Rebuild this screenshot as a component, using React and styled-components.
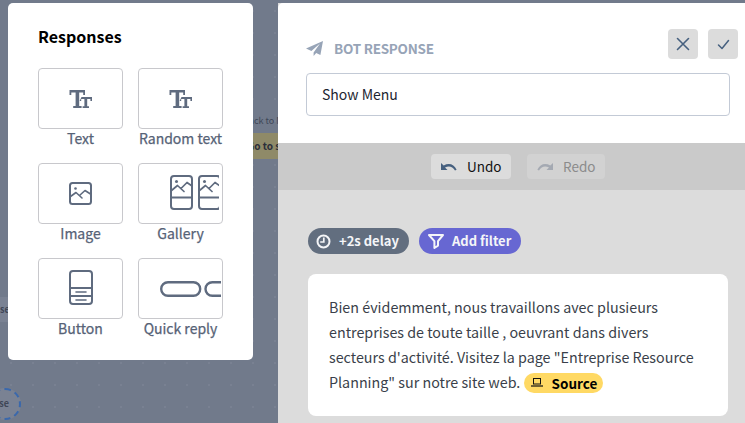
import React from "react";
import styled, { createGlobalStyle } from "styled-components";

const Global = createGlobalStyle`
  html, body {
    margin: 0;
    padding: 0;
    height: 100%;
    overflow: hidden;
  }
  body {
    font-family: "Noto Sans CJK SC", "Source Sans Pro", "Open Sans", sans-serif;
    background: #717a8b;
  }
  * { box-sizing: border-box; }
`;

const Page = styled.div`
  position: relative;
  width: 745px;
  height: 423px;
  overflow: hidden;
  display: flex;
  background-color: #717a8b;
  background-image: radial-gradient(circle, #798192 1px, transparent 1.2px);
  background-size: 22px 22px;
`;

/* bits of the flow canvas showing behind the overlay */
const CanvasLabel = styled.span`
  position: absolute;
  left: 243px;
  top: 115px;
  font-size: 9px;
  line-height: 12px;
  color: #3f4757;
  white-space: nowrap;
`;

const CanvasTag = styled.div`
  position: absolute;
  left: 240px;
  top: 133px;
  width: 70px;
  height: 26px;
  padding-left: 7px;
  background: #8f8a68;
  color: #2c2f3a;
  font-size: 10px;
  font-weight: 700;
  line-height: 26px;
  white-space: nowrap;
`;

const CanvasNode = styled.div`
  position: absolute;
  left: -11px;
  top: 388px;
  width: 32px;
  height: 32px;
  border-radius: 50%;
  border: 2px dashed #3a68ac;
  background: #7a8293;
  color: #3f4757;
  font-size: 9px;
  font-weight: 700;
  line-height: 28px;
  text-align: right;
  padding-right: 10px;
`;

const CanvasChip = styled.div`
  position: absolute;
  left: -20px;
  top: 297px;
  width: 50px;
  height: 25px;
  padding-left: 20px;
  background: #7a8293;
  color: #3f4757;
  font-size: 9px;
  font-weight: 700;
  line-height: 25px;
`;

const Picker = styled.aside`
  position: absolute;
  left: 8px;
  top: 3px;
  width: 245px;
  height: 357px;
  background: #fff;
  border-radius: 5px;
  padding: 22px 30px 0;
`;

const PickerTitle = styled.h2`
  margin: 0 0 21px;
  font-size: 16px;
  font-weight: 700;
  line-height: 22px;
  color: #000;
`;

const PickerGrid = styled.div`
  display: grid;
  grid-template-columns: 85px 85px;
  column-gap: 15px;
  row-gap: 11px;
`;

const PickerItem = styled.div`
  display: flex;
  flex-direction: column;
  align-items: center;
`;

const PickerBox = styled.div`
  width: 85px;
  height: 61px;
  border: 1px solid #c8c8cc;
  border-radius: 4px;
  display: flex;
  align-items: center;
  justify-content: ${(p) => (p.$inset ? "flex-start" : "center")};
  padding-left: ${(p) => p.$inset || 0}px;
  padding-bottom: ${(p) => (p.$lift ? 3 : 0)}px;
  overflow: hidden;
  color: #5f6b7f;
`;

const PickerLabel = styled.span`
  font-size: 14px;
  font-weight: 400;
  line-height: 20px;
  margin-top: -1px;
  margin-bottom: 4px;
  color: #566276;
  -webkit-text-stroke: 0.25px #566276;
  white-space: nowrap;
`;

const Editor = styled.section`
  position: absolute;
  left: 278px;
  top: 3px;
  right: 0;
  bottom: 0;
  display: flex;
  flex-direction: column;
  background: #dcdcdc;
`;

const EditorHeader = styled.header`
  position: relative;
  height: 140px;
  background: #fff;
  border-top-left-radius: 5px;
  padding: 35px 15px 0 28px;
`;

const HeaderRow = styled.div`
  display: flex;
  align-items: center;
  gap: 11px;
  height: 20px;
  margin-bottom: 15px;
`;

const HeaderTitle = styled.span`
  font-size: 13.5px;
  font-weight: 700;
  line-height: 20px;
  letter-spacing: -0.25px;
  color: #97a4b7;
`;

const HeaderActions = styled.div`
  position: absolute;
  top: 26px;
  right: 7px;
  display: flex;
  gap: 10px;
`;

const SquareButton = styled.button`
  width: 30px;
  height: 30px;
  padding: 0;
  border: 0;
  border-radius: 4px;
  background: #dcdcdc;
  color: #46607f;
  display: flex;
  align-items: center;
  justify-content: center;
`;

const NameInput = styled.div`
  width: 424px;
  height: 43px;
  border: 1px solid #c3cad6;
  border-radius: 4px;
  padding: 0 15px;
  font-size: 14px;
  line-height: 41px;
  color: #1d2530;
`;

const HistoryBar = styled.div`
  height: 47px;
  background: #cacaca;
  display: flex;
  align-items: center;
  justify-content: center;
  gap: 16px;
  padding-left: 13px;
`;

const HistoryButton = styled.button`
  width: ${(p) => (p.disabled ? 78 : 80)}px;
  height: 25px;
  padding: 0 0 0 10px;
  border: 0;
  border-radius: 4px;
  background: ${(p) => (p.disabled ? "#d2d2d2" : "#dcdcdc")};
  color: ${(p) => (p.disabled ? "#8b8b8b" : "#111")};
  font-family: inherit;
  font-size: 13.5px;
  line-height: 25px;
  display: flex;
  align-items: center;
  gap: 10px;
`;

const EditorBody = styled.div`
  flex: 1;
  padding: 38px 17px 0 30px;
`;

const PillRow = styled.div`
  display: flex;
  gap: 10px;
  margin-bottom: 20px;
`;

const Pill = styled.span`
  height: 26px;
  width: ${(p) => p.$w}px;
  border-radius: 13px;
  padding-left: ${(p) => p.$pad}px;
  background: ${(p) => p.$bg};
  color: #f4f5f8;
  font-size: 13px;
  font-weight: 700;
  line-height: 28px;
  display: flex;
  align-items: center;
  gap: 8px;
`;

const MessageCard = styled.div`
  width: 420px;
  height: 142px;
  background: #fff;
  border-radius: 8px;
  padding: 20px 21px;
  font-size: 14.3px;
  line-height: 25px;
  color: #3a3f4a;
`;

const SourceTag = styled.span`
  display: inline-flex;
  align-items: center;
  gap: 9px;
  height: 20px;
  padding: 0 6px 0 7px;
  border-radius: 10px;
  background: #ffd964;
  color: #000;
  font-size: 13.5px;
  font-weight: 700;
  line-height: 20px;
  vertical-align: 1px;
`;

const Svg = ({ w, h, sw = 2, children }) => (
  <svg
    width={w}
    height={h}
    viewBox={`0 0 ${w} ${h}`}
    fill="none"
    stroke="currentColor"
    strokeWidth={sw}
    strokeLinecap="round"
    strokeLinejoin="round"
    style={{ flexShrink: 0 }}
  >
    {children}
  </svg>
);

const TextIcon = () => (
  <svg width="24" height="20" viewBox="0 0 24 20" fill="currentColor">
    <path d="M.5 1H16v5h-1.8V3.6H10.2V17h2.4v2H4.2v-2h2.4V3.6H2.3V6H.5z" />
    <path d="M12.5 8H23v4h-1.6v-2h-3.2v7.2H20V19h-6.4v-1.8h1.8V10h-3.2v2h-1.6z" />
  </svg>
);

const ImageIcon = () => (
  <Svg w={23} h={23} sw={2}>
    <rect x="1" y="1" width="21" height="21" rx="2.5" />
    <circle cx="6.5" cy="6.5" r="1.3" fill="currentColor" stroke="none" />
    <path d="M1.5 14.5L7 10.5l6 5.5M10.5 13.5l5.5-5 5.5 3.5" strokeWidth="1.6" />
  </Svg>
);

const GalleryCard = () => (
  <>
    <rect x="1" y="1" width="21" height="33" rx="3" />
    <path d="M1 22.5h21" />
    <circle cx="6.5" cy="6.5" r="1.5" fill="currentColor" stroke="none" />
    <path d="M1.5 15.5l6-5 6.5 6M11 13.5l6-6 5 3.5" strokeWidth="1.7" />
  </>
);

const GalleryIcon = () => (
  <Svg w={49} h={35}>
    <GalleryCard />
    <g transform="translate(28 0)">
      <GalleryCard />
    </g>
  </Svg>
);

const ButtonIcon = () => (
  <Svg w={24} h={35}>
    <rect x="1" y="1" width="22" height="33" rx="3" />
    <path d="M1 18h22M1 26h22" />
    <path d="M7 22h10M7 30h10" strokeWidth="1.6" />
  </Svg>
);

const QuickReplyIcon = () => (
  <Svg w={61} h={16} sw={2.4}>
    <rect x="1.2" y="1.2" width="39" height="13.6" rx="6.8" />
    <rect x="45.5" y="1.2" width="39" height="13.6" rx="6.8" />
  </Svg>
);

const PlaneIcon = () => (
  <svg width="17" height="15" viewBox="0 0 17 15" fill="#97a4b7">
    <path d="M0 7.6L17 0l-2.6 14-4.2-2L7.6 15V11.4L14 2.6 5.4 10z" />
  </svg>
);

const CloseIcon = () => (
  <Svg w={14} h={14} sw={1.6}>
    <path d="M1.5 1.5l11 11M12.5 1.5l-11 11" />
  </Svg>
);

const CheckIcon = () => (
  <Svg w={13} h={11} sw={1.5}>
    <path d="M1.5 6l3.5 3.5L11.5 1.5" />
  </Svg>
);

const UndoIcon = () => (
  <svg width="16" height="8" viewBox="0 0 16 8" fill="#46607f">
    <path d="M0 0v7h6.5L4 4.6C8 2.5 11.5 3.5 14 7.6l1.6-.8C13 1 8-.6 2.7 2.4z" />
  </svg>
);

const RedoIcon = () => (
  <svg width="16" height="8" viewBox="0 0 16 8" fill="#a4a9b2">
    <path d="M16 0v7H9.5L12 4.6C8 2.5 4.5 3.5 2 7.6L.4 6.8C3 1 8-.6 13.3 2.4z" />
  </svg>
);

const ClockIcon = () => (
  <svg width="15" height="15" viewBox="0 0 15 15" fill="none" stroke="#f4f5f8" strokeWidth="2">
    <circle cx="7.5" cy="7.5" r="6" />
    <path d="M7.8 3.4v4.6H4.2" strokeWidth="1.7" />
  </svg>
);

const FilterIcon = () => (
  <svg width="16" height="15" viewBox="0 0 16 15" fill="none" stroke="#f4f5f8" strokeWidth="2" strokeLinejoin="round">
    <path d="M1 1h14L10 7.2v4.4L6.4 14V7.2z" />
  </svg>
);

const LaptopIcon = () => (
  <svg width="12" height="9" viewBox="0 0 12 9" fill="none" stroke="#111" strokeWidth="1">
    <rect x="2.5" y="0.5" width="7" height="5.5" />
    <path d="M0 8h12" strokeWidth="1.2" />
  </svg>
);

const responses = [
  { label: "Text", icon: <TextIcon /> },
  { label: "Random text", icon: <TextIcon /> },
  { label: "Image", icon: <ImageIcon /> },
  { label: "Gallery", icon: <GalleryIcon />, inset: 31, lift: true },
  { label: "Button", icon: <ButtonIcon />, lift: true },
  { label: "Quick reply", icon: <QuickReplyIcon />, inset: 21 },
];

export default function App() {
  return (
    <Page>
      <Global />
      <CanvasLabel>Back to Menu</CanvasLabel>
      <CanvasTag>Go to start</CanvasTag>
      <CanvasChip>se</CanvasChip>
      <CanvasNode>se</CanvasNode>

      <Picker>
        <PickerTitle>Responses</PickerTitle>
        <PickerGrid>
          {responses.map((r) => (
            <PickerItem key={r.label}>
              <PickerBox $inset={r.inset} $lift={r.lift}>{r.icon}</PickerBox>
              <PickerLabel>{r.label}</PickerLabel>
            </PickerItem>
          ))}
        </PickerGrid>
      </Picker>

      <Editor>
        <EditorHeader>
          <HeaderRow>
            <PlaneIcon />
            <HeaderTitle>BOT RESPONSE</HeaderTitle>
          </HeaderRow>
          <HeaderActions>
            <SquareButton><CloseIcon /></SquareButton>
            <SquareButton><CheckIcon /></SquareButton>
          </HeaderActions>
          <NameInput>Show Menu</NameInput>
        </EditorHeader>

        <HistoryBar>
          <HistoryButton><UndoIcon />Undo</HistoryButton>
          <HistoryButton disabled><RedoIcon />Redo</HistoryButton>
        </HistoryBar>

        <EditorBody>
          <PillRow>
            <Pill $bg="#626e7f" $w={101} $pad={8}><ClockIcon />+2s delay</Pill>
            <Pill $bg="#6767d2" $w={102} $pad={9}><FilterIcon />Add filter</Pill>
          </PillRow>
          <MessageCard>
            Bien évidemment, nous travaillons avec plusieurs entreprises de toute taille , oeuvrant dans divers secteurs d'activité. Visitez la page "Entreprise Resource Planning" sur notre site web.{" "}
            <SourceTag><LaptopIcon />Source</SourceTag>
          </MessageCard>
        </EditorBody>
      </Editor>
    </Page>
  );
}
